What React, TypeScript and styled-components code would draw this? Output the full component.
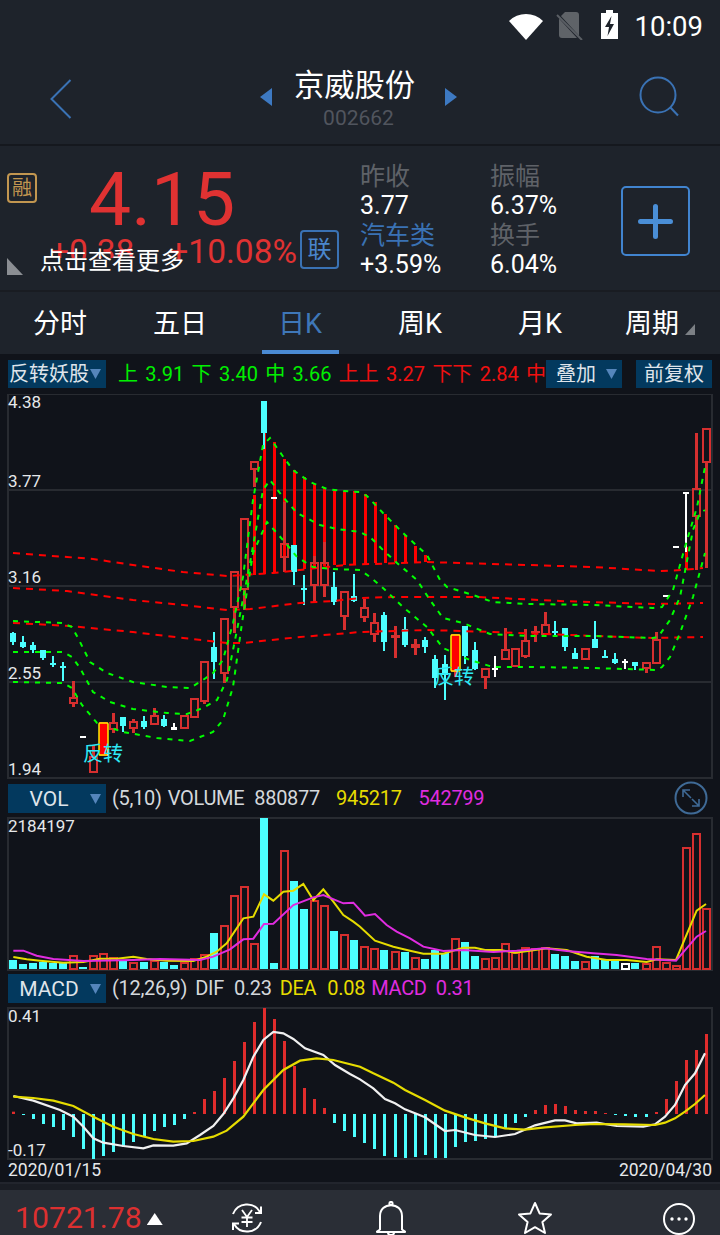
import React from 'react';
import styled, { createGlobalStyle } from 'styled-components';

const FONT = 'Roboto, "Noto Sans CJK SC", "Liberation Sans", sans-serif';
const BG = '#1e232b';
const CHART = '#10131a';
const GRID = '#282b31';
const RED = '#e03232';
const BLUE = '#3a72b4';
const CYAN = '#4cffff';
const CANDLE = '#d62f2f';

const Global = createGlobalStyle`
  html, body { margin: 0; padding: 0; background: ${BG}; }
  #root { width: 720px; height: 1235px; overflow: hidden; }
  * { box-sizing: border-box; }
`;

const Page = styled.div`
  width: 720px; height: 1235px; overflow: hidden; background: ${BG};
  font-family: ${FONT}; color: #fff; display: flex; flex-direction: column;
`;

/* ---------- top ---------- */
const StatusBar = styled.div`
  height: 56px; display: flex; align-items: flex-start; justify-content: flex-end; padding: 10px 17px 0 0;
`;
const StatusIcon = styled.svg<{ $ml: number }>`
  display: block; flex: none; margin-left: ${p => p.$ml}px;
`;
const Clock = styled.div`
  margin: 1px 0 0 17px; font-size: 27.5px; line-height: 32px; color: #fff;
`;
const NavBar = styled.div`
  height: 90px; display: flex; align-items: flex-start; border-bottom: 2px solid #15181e; padding-left: 50px;
`;
const BackIcon = styled.svg`
  display: block; margin-top: 23px; flex: none;
`;
const NavCaret = styled.svg<{ $ml: number }>`
  display: block; margin-top: 32px; margin-left: ${p => p.$ml}px; flex: none;
`;
const TitleBlock = styled.div`
  margin-left: 22px; width: 121px; display: flex; flex-direction: column; align-items: center; padding-top: 10px;
`;
const StockName = styled.div`
  font-size: 30.3px; line-height: 40px; white-space: nowrap;
`;
const StockCode = styled.div`
  font-size: 21px; line-height: 22px; color: #51555e; margin: 1px 0 0 8px;
`;
const SearchIcon = styled.svg`
  display: block; margin-top: 20px; margin-left: 182px; flex: none;
`;

/* ---------- quote ---------- */
const Quote = styled.div`
  position: relative; height: 146px; display: flex; padding-left: 7px; border-bottom: 2px solid #191c22;
`;
const LeftRail = styled.div`
  width: 33px; flex: none; display: flex; flex-direction: column; justify-content: space-between; padding: 27px 0 15px;
`;
const MarginBadge = styled.div`
  width: 30px; height: 30px; border: 2px solid #c29650; border-radius: 4px; color: #c29650;
  display: flex; align-items: center; justify-content: center; font-size: 20px; line-height: 20px; overflow: hidden;
`;
const CornerMark = styled.div`
  width: 16px; height: 17px; background: #8b8e93; clip-path: polygon(0 0, 100% 100%, 0 100%);
`;
const PriceCol = styled.div`
  width: 320px; flex: none; display: flex; flex-direction: column;
`;
const Price = styled.div`
  font-size: 75px; line-height: 75px; color: ${RED}; margin: 16px 0 0 49px;
`;
const ChangeRow = styled.div`
  display: flex; align-items: center; height: 39px; margin-top: -7px; position: relative;
`;
const ChangeValue = styled.span<{ $ml: number }>`
  font-size: 33.5px; line-height: 39px; color: ${RED}; margin: 4px 0 0 ${p => p.$ml}px; white-space: nowrap;
`;
const LinkBadge = styled.div`
  width: 39px; height: 39px; margin-left: 3px; border: 2px solid ${BLUE}; border-radius: 4px; color: #4a86cc;
  display: flex; align-items: center; justify-content: center; font-size: 24px; line-height: 24px; flex: none;
`;
const Toast = styled.div`
  position: absolute; left: 40px; top: 101px; width: 132px; height: 28px; font-size: 24px; line-height: 28px;
  white-space: nowrap; color: #fff; overflow: visible;
  background: linear-gradient(${BG}00 0, ${BG}00 11px, ${BG} 11px, ${BG} 100%);
`;
const StatCol = styled.div<{ $w: number }>`
  width: ${p => p.$w}px; flex: none; padding-top: 16px; display: flex; flex-direction: column;
`;
const StatLine = styled.div<{ $c: string }>`
  font-size: 25px; line-height: 29.4px; color: ${p => p.$c}; white-space: nowrap;
`;
const AddButton = styled.div`
  width: 69px; height: 70px; margin-top: 40px; margin-left: 1px; border: 2px solid #4184cf; border-radius: 5px;
  display: flex; align-items: center; justify-content: center; flex: none;
`;
const PlusGlyph = styled.svg`
  display: block;
`;

/* ---------- tabs ---------- */
const Tabs = styled.div`
  height: 62px; display: grid; grid-template-columns: repeat(6, 120px); background: ${BG};
`;
const Tab = styled.div<{ $active?: boolean }>`
  position: relative; display: flex; align-items: center; justify-content: center; gap: 6px;
  font-size: 27px; line-height: 32px; padding-top: 2px;
  color: ${p => (p.$active ? '#3f77b8' : '#fff')}; white-space: nowrap;
`;
const TabUnderline = styled.div`
  position: absolute; left: 22px; bottom: 0; width: 77px; height: 4px; background: #4a8ad4;
`;
const TabCorner = styled.div`
  width: 10px; height: 11px; margin-top: 11px; background: #7c8085; clip-path: polygon(100% 0, 100% 100%, 0 100%);
`;

/* ---------- chart zone ---------- */
const ChartZone = styled.div`
  background: ${CHART}; display: flex; flex-direction: column; width: 720px;
`;
const IndicatorBar = styled.div`
  height: 40px; display: flex; align-items: center; padding: 0 8px;
`;
const Picker = styled.div<{ $w: number; $ml?: number }>`
  width: ${p => p.$w}px; height: 28px; flex: none; margin-left: ${p => p.$ml ?? 0}px; background: #03395e;
  display: flex; align-items: center; font-size: 20px; line-height: 28px; color: #dfe4ea; white-space: nowrap;
`;
const PickerLabel = styled.span`
  flex: 1; text-align: center;
`;
const Caret = styled.svg`
  display: block; flex: none; margin-right: 5px;
`;
const Legend = styled.div`
  flex: 1; min-width: 0; margin-left: 12px; overflow: hidden; display: flex; gap: 7.3px; font-size: 20px; line-height: 28px; white-space: nowrap;
`;
const LegendItem = styled.span<{ $c: string }>`
  color: ${p => p.$c}; flex: none;
`;
const Panel = styled.div<{ $h: number }>`
  position: relative; height: ${p => p.$h}px;
`;
const PanelSvg = styled.svg`
  display: block; position: absolute; inset: 0;
`;
const AxisLabel = styled.span<{ $top: number }>`
  position: absolute; left: 8px; top: ${p => p.$top}px; font-size: 17px; line-height: 20px; color: #e6e8ea; white-space: nowrap;
`;
const SignalText = styled.span<{ $left: number; $top: number }>`
  position: absolute; left: ${p => p.$left}px; top: ${p => p.$top}px; font-size: 20px; line-height: 20px; color: #2ee8f5; white-space: nowrap;
`;
const InfoRow = styled.div<{ $h: number; $pt: number }>`
  height: ${p => p.$h}px; padding: ${p => p.$pt}px 8px 0; display: flex; align-items: flex-start; position: relative;
`;
const InfoPicker = styled(Picker)`
  height: 29px; font-size: 21px;
`;
const InfoText = styled.span<{ $c: string; $ml: number }>`
  color: ${p => p.$c}; margin-left: ${p => p.$ml}px; font-size: 20px; line-height: 29px; white-space: nowrap; letter-spacing: -0.3px;
`;
const ExpandIcon = styled.svg`
  display: block; position: absolute; right: 12px; top: 1px;
`;
const DateRow = styled.div`
  height: 24px; padding: 0 8px; display: flex; justify-content: space-between; font-size: 17.5px; line-height: 20px; color: #e6e8ea; border-bottom: 2px solid #22252d;
`;
const Spacer = styled.div`
  height: 6px; background: #1a1d24;
`;

/* ---------- bottom ---------- */
const BottomBar = styled.div`
  flex: 1; min-height: 0; background: #2a2e36; display: flex; align-items: flex-start; padding: 11px 21px 0 15px; overflow: hidden;
`;
const IndexValue = styled.div`
  font-size: 30.2px; line-height: 34px; color: #dc3030; white-space: nowrap;
`;
const UpMark = styled.div`
  width: 16px; height: 12px; margin: 12px 0 0 5px; background: #fff; clip-path: polygon(50% 0, 100% 100%, 0 100%);
`;
const BottomIcons = styled.div`
  margin-left: auto; display: flex; gap: 104px;
`;
const BottomIcon = styled.svg`
  display: block; flex: none;
`;

/* ---------- data ---------- */
type Kind = 'r' | 'c' | 'w' | 'd';
type Candle = [number, number, number, number, Kind];
const cx = (i: number) => Math.round(13 + 10.04 * i);

const candles: Candle[] = [
  [632, 645, 633, 642, 'c'], [636, 648, 642, 647, 'c'], [642, 653, 645, 650, 'c'], [650, 660, 650, 658, 'c'],
  [656, 667, 663, 665, 'c'], [662, 681, 666, 667, 'c'], [681, 707, 698, 703, 'r'], [737, 737, 736, 738, 'd'],
  [745, 772, 757, 772, 'r'], [723, 755, 723, 755, 'r'], [713, 733, 723, 729, 'r'], [717, 732, 717, 726, 'c'],
  [719, 733, 722, 728, 'r'], [716, 729, 721, 727, 'c'], [708, 725, 716, 724, 'r'], [715, 727, 719, 726, 'c'],
  [723, 730, 727, 730, 'w'], [716, 729, 716, 728, 'r'], [699, 717, 699, 717, 'r'], [662, 704, 662, 701, 'r'],
  [632, 679, 647, 662, 'c'], [619, 683, 619, 673, 'r'], [572, 633, 572, 607, 'r'], [519, 610, 519, 589, 'r'],
  [462, 487, 462, 469, 'r'], [401, 449, 401, 433, 'c'], [498, 498, 497, 499, 'd'], [502, 572, 544, 557, 'r'],
  [545, 585, 545, 572, 'c'], [575, 605, 588, 590, 'c'], [556, 603, 563, 585, 'r'], [542, 597, 563, 585, 'r'],
  [572, 605, 587, 602, 'c'], [592, 630, 592, 616, 'r'], [574, 602, 596, 601, 'c'], [599, 622, 608, 617, 'r'],
  [613, 642, 623, 634, 'r'], [612, 651, 615, 642, 'c'], [626, 658, 635, 638, 'r'], [617, 647, 629, 645, 'c'],
  [639, 655, 644, 648, 'r'], [637, 653, 640, 647, 'c'], [655, 688, 659, 678, 'c'], [655, 700, 664, 675, 'c'],
  [635, 677, 635, 671, 'r'], [626, 664, 626, 656, 'c'], [642, 670, 650, 669, 'c'], [669, 689, 669, 677, 'r'],
  [656, 677, 668, 669, 'w'], [628, 659, 650, 659, 'r'], [649, 666, 649, 666, 'r'], [629, 658, 641, 656, 'r'],
  [626, 642, 631, 633, 'r'], [612, 634, 625, 634, 'r'], [621, 636, 631, 632, 'c'], [628, 651, 628, 647, 'c'],
  [648, 659, 653, 659, 'c'], [649, 659, 649, 659, 'r'], [621, 648, 639, 648, 'c'], [650, 658, 656, 658, 'c'],
  [653, 664, 659, 663, 'c'], [659, 669, 661, 662, 'w'], [662, 670, 662, 666, 'c'], [663, 673, 663, 668, 'r'],
  [632, 663, 640, 663, 'r'], [596, 596, 595, 597, 'd'], [547, 547, 546, 548, 'd'], [492, 552, 492, 494, 'w'],
  [433, 570, 489, 516, 'r'], [429, 568, 429, 462, 'r'],
];

const hatch: [number, number, number][] = [
  [254, 495, 575], [264, 433, 574], [274, 442, 572], [284, 459, 571], [294, 470, 570], [304, 477, 569], [314, 484, 567],
  [324, 488, 566], [334, 491, 565], [344, 491, 565], [354, 491, 564], [365, 494, 564], [375, 502, 563], [385, 514, 563],
  [395, 525, 562], [405, 535, 562], [415, 546, 562], [425, 555, 562], [686, 547, 570], [696, 516, 570], [706, 465, 568],
];

const P = (a: number[][]) => a.map(q => q.join(',')).join(' ');

const greenLines: number[][][] = [
  [[13,621],[62,623],[72,627],[78,638],[90,662],[107,673],[133,682],[167,687],[190,688],[203,680],[213,673],[223,660],[233,623],[243,577],[253,500],[263,445],[270,438],[282,455],[293,470],[310,482],[327,489],[343,491],[360,492],[367,496],[383,513],[403,533],[427,555],[440,580],[447,587],[473,595],[493,602],[527,604],[593,605],[653,608],[662,607],[673,590],[685,547],[697,507],[705,467]],
  [[13,652],[63,652],[72,657],[80,668],[93,692],[110,702],[133,709],[167,713],[187,714],[203,708],[217,700],[227,680],[237,630],[250,563],[263,490],[270,480],[283,497],[297,513],[320,525],[337,529],[360,532],[370,537],[383,550],[397,563],[417,580],[430,600],[443,618],[463,623],[490,634],[527,636],[593,636],[653,638],[658,637],[670,620],[680,597],[693,530],[700,513],[705,510]],
  [[13,682],[63,683],[72,688],[82,705],[97,723],[123,732],[157,738],[190,741],[200,737],[213,732],[223,720],[233,687],[242,623],[253,553],[267,522],[283,540],[297,557],[313,567],[333,569],[360,570],[370,577],[383,588],[403,607],[427,627],[443,648],[470,660],[493,667],[527,667],[593,668],[657,670],[662,667],[670,657],[680,633],[693,597],[705,553]],
];
const redLines: number[][][] = [
  [[13,553],[67,557],[93,559],[133,565],[183,572],[227,576],[273,573],[345,565],[427,562],[527,565],[593,567],[660,571],[683,570],[703,568]],
  [[13,588],[67,591],[133,600],[183,605],[227,610],[250,609],[300,603],[333,601],[360,598],[393,597],[477,597],[560,601],[653,604],[703,603]],
  [[13,623],[70,626],[133,632],[183,638],[227,643],[243,643],[300,637],[350,633],[360,632],[427,630],[493,632],[593,636],[653,638],[703,637]],
];

type Vol = [number, 'r' | 'c' | 'w'];
const vols: Vol[] = [
  [960,'c'],[964,'c'],[963,'c'],[962,'c'],[963,'c'],[963,'c'],[955,'r'],[967,'c'],[955,'r'],[953,'r'],[957,'r'],[960,'c'],[962,'r'],[962,'c'],[960,'r'],[962,'c'],[965,'c'],[962,'r'],[958,'r'],[954,'r'],
  [933,'c'],[925,'r'],[895,'r'],[886,'r'],[943,'r'],[818,'c'],[963,'c'],[850,'r'],[881,'c'],[909,'c'],[900,'r'],[905,'r'],[931,'c'],[934,'r'],[940,'c'],
  [946,'r'],[948,'r'],[950,'c'],[951,'r'],[952,'c'],[957,'r'],[959,'c'],[950,'c'],[953,'c'],[938,'r'],[942,'c'],[956,'c'],[958,'r'],[957,'r'],[943,'r'],[952,'r'],[947,'r'],[948,'r'],[947,'r'],[954,'c'],[956,'c'],[961,'c'],[961,'r'],[956,'c'],[960,'c'],[961,'c'],[963,'w'],[963,'c'],[963,'r'],[946,'r'],[962,'r'],[965,'r'],[847,'r'],[833,'r'],[908,'r'],
];

const z = (l: number[][], r: number[][], oy: number) =>
  P([...l.map(([a, b]) => [a / 3, oy + b / 3]), ...r.map(([a, b]) => [360 + a / 3, oy + b / 3])]);

const volYellow = z(
  [[40,531],[80,538],[120,542],[190,548],[250,546],[300,536],[350,536],[400,530],[440,537],[500,542],[580,543],[620,530],[650,515],[680,490],[730,415],[760,410],[792,343],[820,362],[850,335],[880,332],[910,312],[940,360],[970,328],[1000,365],[1030,405],[1060,425]],
  [[0,440],[45,482],[100,500],[150,512],[190,521],[250,521],[310,503],[345,503],[375,510],[420,510],[465,518],[510,512],[560,505],[620,510],[680,530],[740,540],[800,540],[860,546],[890,538],[948,540],[1010,392],[1038,372]],
  780
);
const volMagenta = z(
  [[40,512],[70,512],[110,527],[160,537],[250,543],[400,540],[480,537],[600,540],[640,530],[690,508],[730,478],[760,476],[792,432],[820,431],[880,375],[940,352],[970,345],[1030,370],[1060,368]],
  [[0,390],[15,407],[45,402],[80,435],[110,455],[150,475],[190,500],[250,513],[310,510],[400,516],[470,512],[555,505],[620,513],[700,520],[770,525],[860,537],[948,542],[1010,470],[1038,453]],
  780
);

const macd = [
  335,345,357,372,381,390,411,447,477,468,456,441,426,411,393,381,375,357,336,297,273,234,183,126,66,24,57,123,198,264,297,324,369,393,411,
  429,447,468,471,474,471,465,474,474,441,426,423,417,408,387,369,351,330,315,312,318,330,333,333,339,345,348,351,351,336,297,243,180,150,102,
];
const difLine = z(
  [[40,288],[100,302],[180,330],[220,350],[250,380],[280,415],[310,428],[370,438],[430,445],[460,436],[520,437],[560,430],[600,405],[640,378],[670,342],[700,295],[730,240],[760,170],[790,120],[820,96],[850,100],[880,117],[915,145],[970,165],[1005,195],[1050,222]],
  [[0,238],[40,265],[75,297],[105,310],[135,328],[195,352],[255,393],[285,390],[345,405],[405,411],[465,402],[525,376],[585,361],[615,361],[650,370],[710,368],[770,378],[850,380],[885,373],[915,350],[945,315],[975,255],[1005,220],[1035,160]],
  1000
);
const deaLine = z(
  [[40,290],[100,294],[160,302],[220,318],[280,350],[340,380],[400,402],[460,417],[520,425],[580,423],[640,410],[680,392],[730,350],[790,270],[850,210],[900,182],[950,175],[1000,180]],
  [[0,200],[40,220],[100,248],[135,270],[195,300],[255,332],[315,352],[375,370],[435,385],[495,389],[555,382],[645,375],[705,372],[795,373],[885,375],[915,368],[945,355],[975,335],[1005,312],[1035,285]],
  1000
);

const CaretDown = () => (
  <Caret width="11" height="10" viewBox="0 0 11 10"><path d="M0 0H11L5.5 10Z" fill="#5585bb" /></Caret>
);

const CandleMark = ({ c, i }: { c: Candle; i: number }) => {
  const x = cx(i);
  const [hi, lo, top, bot, kind] = c;
  if (kind === 'd') return <rect x={x - 3} y={top} width={6} height={bot - top} fill="#fff" />;
  if (kind === 'r') {
    return (
      <g>
        {hi < top && <line x1={x + 0.5} x2={x + 0.5} y1={hi} y2={top} stroke={CANDLE} strokeWidth={3} />}
        {lo > bot && <line x1={x + 0.5} x2={x + 0.5} y1={bot} y2={lo} stroke={CANDLE} strokeWidth={3} />}
        {bot - top < 5
          ? <rect x={x - 4} y={top} width={9} height={Math.max(bot - top, 2)} fill={CANDLE} />
          : <rect x={x - 3} y={top} width={7} height={bot - top} fill="none" stroke={CANDLE} strokeWidth={2} />}
      </g>
    );
  }
  const col = kind === 'w' ? '#fff' : CYAN;
  return (
    <g>
      <line x1={x} x2={x} y1={hi} y2={lo} stroke={col} strokeWidth={2} />
      <rect x={x - 3} y={top} width={6} height={Math.max(bot - top, 2)} fill={col} />
    </g>
  );
};

const Frame = ({ top, bottom, rows = [] }: { top: number; bottom: number; rows?: number[] }) => (
  <g stroke={GRID} strokeWidth={2} fill="none">
    <rect x={8} y={top} width={704} height={bottom - top} />
    {rows.map(y => <line key={y} x1={8} x2={712} y1={y} y2={y} />)}
  </g>
);

const PriceChart = () => (
  <PanelSvg width="720" height="386" viewBox="0 394 720 386">
    <Frame top={394} bottom={778} rows={[490, 586, 682]} />
    {hatch.map(([x, a, b]) => <line key={x} x1={x + 0.5} x2={x + 0.5} y1={a} y2={b} stroke="#ff0000" strokeWidth={3} />)}
    {candles.map((c, i) => <CandleMark key={i} c={c} i={i} />)}
    {redLines.map((l, i) => <polyline key={i} points={P(l)} fill="none" stroke="#ff0000" strokeWidth={2} strokeDasharray="7 6" />)}
    {greenLines.map((l, i) => <polyline key={i} points={P(l)} fill="none" stroke="#00ff00" strokeWidth={2} strokeDasharray="5 6" />)}
    {[cx(9), cx(44)].map((x, i) => (
      <rect key={x} x={x - 4} y={i ? 635 : 723} width={9} height={i ? 36 : 32} rx={1} fill="#ff0000" stroke="#ffee00" strokeWidth={1.5} />
    ))}
  </PanelSvg>
);

const VolumeChart = () => (
  <PanelSvg width="720" height="154" viewBox="0 817 720 154">
    <Frame top={818} bottom={970} />
    {vols.map(([t, k], i) =>
      k === 'c'
        ? <rect key={i} x={cx(i) - 4} y={t} width={8} height={969 - t} fill={CYAN} />
        : <rect key={i} x={cx(i) - 3} y={t + 1} width={7} height={968 - t} fill="none" stroke={k === 'w' ? '#fff' : CANDLE} strokeWidth={2} />
    )}
    <polyline points={volYellow} fill="none" stroke="#e6dc00" strokeWidth={2} />
    <polyline points={volMagenta} fill="none" stroke="#e02ce0" strokeWidth={2} />
  </PanelSvg>
);

const MacdChart = () => (
  <PanelSvg width="720" height="154" viewBox="0 1006 720 154">
    <Frame top={1008} bottom={1159} />
    {macd.map((v, i) => {
      const y = 1000 + v / 3;
      const up = v < 342;
      return <line key={i} x1={cx(i) + 0.5} x2={cx(i) + 0.5} y1={1114} y2={y} stroke={up ? '#e02c2c' : CYAN} strokeWidth={3} />;
    })}
    <polyline points={difLine} fill="none" stroke="#f0f0f0" strokeWidth={2.2} />
    <polyline points={deaLine} fill="none" stroke="#e6dc00" strokeWidth={2.2} />
  </PanelSvg>
);

export default function App() {
  return (
    <Page>
      <Global />
      <StatusBar>
        <StatusIcon $ml={0} width="36" height="30" viewBox="0 0 36 30">
          <path d="M18 30L1 11A24 24 0 0 1 35 11Z" fill="#fff" />
        </StatusIcon>
        <StatusIcon $ml={12} width="27" height="30" viewBox="0 0 27 30">
          <path d="M9 2H20a3 3 0 0 1 3 3V25a3 3 0 0 1-3 3H6a3 3 0 0 1-3-3V8Z" fill="#5f6368" />
          <path d="M1 4L24 29" stroke={BG} strokeWidth="3" />
          <path d="M1 5L26 30" stroke="#5a5e64" strokeWidth="2" />
        </StatusIcon>
        <StatusIcon $ml={18} width="17" height="30" viewBox="0 0 17 30">
          <path d="M5 0H12V3H17V29H0V3H5Z" fill="#fff" />
          <path d="M10.5 6L4 17H8L6.5 26L13 14H9Z" fill={BG} />
        </StatusIcon>
        <Clock>10:09</Clock>
      </StatusBar>
      <NavBar>
        <BackIcon width="22" height="40" viewBox="0 0 22 40">
          <path d="M20.5 1L1.5 20L20.5 39" fill="none" stroke="#3a72b4" strokeWidth="2" />
        </BackIcon>
        <NavCaret $ml={188} width="12" height="18" viewBox="0 0 12 18"><path d="M12 0V18L0 9Z" fill="#3d79c2" /></NavCaret>
        <TitleBlock>
          <StockName>京威股份</StockName>
          <StockCode>002662</StockCode>
        </TitleBlock>
        <NavCaret $ml={30} width="12" height="18" viewBox="0 0 12 18"><path d="M0 0V18L12 9Z" fill="#3d79c2" /></NavCaret>
        <SearchIcon width="42" height="42" viewBox="0 0 42 42">
          <circle cx="19" cy="19" r="17.5" fill="none" stroke="#3a72b4" strokeWidth="2" />
          <path d="M31 31L39 39.5" stroke="#3a72b4" strokeWidth="2" />
        </SearchIcon>
      </NavBar>

      <Quote>
        <LeftRail>
          <MarginBadge>融</MarginBadge>
          <CornerMark />
        </LeftRail>
        <PriceCol>
          <Price>4.15</Price>
          <ChangeRow>
            <ChangeValue $ml={10}>+0.38</ChangeValue>
            <ChangeValue $ml={35}>+10.08%</ChangeValue>
            <LinkBadge>联</LinkBadge>
          </ChangeRow>
        </PriceCol>
        <StatCol $w={130}>
          <StatLine $c="#5f6268">昨收</StatLine>
          <StatLine $c="#fff">3.77</StatLine>
          <StatLine $c="#3a72b4">汽车类</StatLine>
          <StatLine $c="#fff">+3.59%</StatLine>
        </StatCol>
        <StatCol $w={130}>
          <StatLine $c="#5f6268">振幅</StatLine>
          <StatLine $c="#fff">6.37%</StatLine>
          <StatLine $c="#5f6268">换手</StatLine>
          <StatLine $c="#fff">6.04%</StatLine>
        </StatCol>
        <AddButton>
          <PlusGlyph width="35" height="35" viewBox="0 0 35 35">
            <path d="M17.5 2.5V32.5M2.5 17.5H32.5" stroke="#4a8ed6" strokeWidth="5" strokeLinecap="round" />
          </PlusGlyph>
        </AddButton>
        <Toast>点击查看更多</Toast>
      </Quote>

      <Tabs>
        <Tab>分时</Tab>
        <Tab>五日</Tab>
        <Tab $active>日K<TabUnderline /></Tab>
        <Tab>周K</Tab>
        <Tab>月K</Tab>
        <Tab>周期<TabCorner /></Tab>
      </Tabs>

      <ChartZone>
        <IndicatorBar>
          <Picker $w={98}><PickerLabel>反转妖股</PickerLabel><CaretDown /></Picker>
          <Legend>
            <LegendItem $c="#00f000">上</LegendItem>
            <LegendItem $c="#00f000">3.91</LegendItem>
            <LegendItem $c="#00f000">下</LegendItem>
            <LegendItem $c="#00f000">3.40</LegendItem>
            <LegendItem $c="#00f000">中</LegendItem>
            <LegendItem $c="#00f000">3.66</LegendItem>
            <LegendItem $c="#f01010">上上</LegendItem>
            <LegendItem $c="#f01010">3.27</LegendItem>
            <LegendItem $c="#f01010">下下</LegendItem>
            <LegendItem $c="#f01010">2.84</LegendItem>
            <LegendItem $c="#f01010">中</LegendItem>
          </Legend>
          <Picker $w={76}><PickerLabel>叠加</PickerLabel><CaretDown /></Picker>
          <Picker $w={76} $ml={14}><PickerLabel>前复权</PickerLabel></Picker>
        </IndicatorBar>

        <Panel $h={386}>
          <PriceChart />
          <AxisLabel $top={-2}>4.38</AxisLabel>
          <AxisLabel $top={77}>3.77</AxisLabel>
          <AxisLabel $top={173}>3.16</AxisLabel>
          <AxisLabel $top={269}>2.55</AxisLabel>
          <AxisLabel $top={365}>1.94</AxisLabel>
          <SignalText $left={83} $top={350}>反转</SignalText>
          <SignalText $left={434} $top={273}>反转</SignalText>
        </Panel>

        <InfoRow $h={37} $pt={4}>
          <InfoPicker $w={98}><PickerLabel>VOL</PickerLabel><CaretDown /></InfoPicker>
          <InfoText $c="#d4d8dc" $ml={6}>(5,10)</InfoText>
          <InfoText $c="#d4d8dc" $ml={6}>VOLUME</InfoText>
          <InfoText $c="#d4d8dc" $ml={10}>880877</InfoText>
          <InfoText $c="#e6dc00" $ml={16}>945217</InfoText>
          <InfoText $c="#e02ce0" $ml={17}>542799</InfoText>
          <ExpandIcon width="34" height="34" viewBox="0 0 34 34">
            <circle cx="17" cy="17" r="15.5" fill="none" stroke="#3f6a96" strokeWidth="2" />
            <path d="M9 16V9H16M9 9L17 17M18 18L25 25M25 18V25H18" fill="none" stroke="#3f6a96" strokeWidth="1.6" />
          </ExpandIcon>
        </InfoRow>

        <Panel $h={154}>
          <VolumeChart />
          <AxisLabel $top={-1}>2184197</AxisLabel>
        </Panel>

        <InfoRow $h={35} $pt={3}>
          <InfoPicker $w={98}><PickerLabel>MACD</PickerLabel><CaretDown /></InfoPicker>
          <InfoText $c="#d4d8dc" $ml={6}>(12,26,9)</InfoText>
          <InfoText $c="#d4d8dc" $ml={8}>DIF</InfoText>
          <InfoText $c="#d4d8dc" $ml={10}>0.23</InfoText>
          <InfoText $c="#e6dc00" $ml={8}>DEA</InfoText>
          <InfoText $c="#e6dc00" $ml={11}>0.08</InfoText>
          <InfoText $c="#e02ce0" $ml={6}>MACD</InfoText>
          <InfoText $c="#e02ce0" $ml={9}>0.31</InfoText>
        </InfoRow>

        <Panel $h={154}>
          <MacdChart />
          <AxisLabel $top={0}>0.41</AxisLabel>
          <AxisLabel $top={134}>-0.17</AxisLabel>
        </Panel>

        <DateRow>
          <span>2020/01/15</span>
          <span>2020/04/30</span>
        </DateRow>
      </ChartZone>
      <Spacer />

      <BottomBar>
        <IndexValue>10721.78</IndexValue>
        <UpMark />
        <BottomIcons>
          <BottomIcon width="40" height="34" viewBox="0 0 40 34">
            <g fill="none" stroke="#fff" strokeWidth="2">
              <path d="M6 13A15 15 0 0 1 33 11" />
              <path d="M34 21A15 15 0 0 1 7 23" />
              <path d="M34 5.5V12H28" />
              <path d="M6 29V22.5H12" />
              <path d="M15 9L20 16L25 9M20 16V26M14.5 16.5H25.5M14.5 21H25.5" strokeWidth="1.8" />
            </g>
          </BottomIcon>
          <BottomIcon width="40" height="34" viewBox="0 0 40 34">
            <g fill="none" stroke="#fff" strokeWidth="2">
              <circle cx="20" cy="2.5" r="1.6" />
              <path d="M9 28.5V15C9 8 14 4.2 20 4.2S31 8 31 15V28.5L34 30.5V31H6V30.5Z" strokeLinejoin="round" />
              <path d="M17 31.5A3 2.5 0 0 0 23 31.5" />
            </g>
          </BottomIcon>
          <BottomIcon width="40" height="34" viewBox="0 0 40 34">
            <path d="M20 2L24.6 12.4L36 13.5L27.4 21L30 32L20 26.2L10 32L12.6 21L4 13.5L15.4 12.4Z" fill="none" stroke="#fff" strokeWidth="2" strokeLinejoin="round" />
          </BottomIcon>
          <BottomIcon width="40" height="34" viewBox="0 0 40 34">
            <circle cx="20" cy="18" r="15" fill="none" stroke="#fff" strokeWidth="2" />
            <circle cx="13" cy="18" r="1.7" fill="#fff" />
            <circle cx="20" cy="18" r="1.7" fill="#fff" />
            <circle cx="27" cy="18" r="1.7" fill="#fff" />
          </BottomIcon>
        </BottomIcons>
      </BottomBar>
    </Page>
  );
}
